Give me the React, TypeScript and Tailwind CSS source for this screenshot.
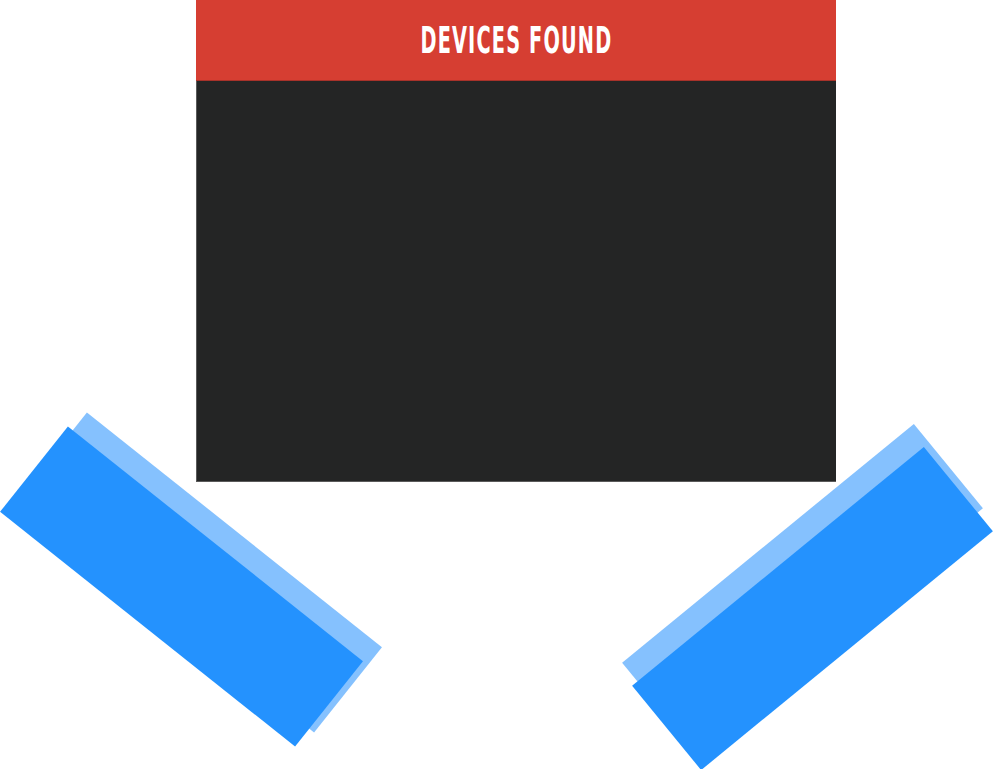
import React from 'react';

// decorative tilted bars below the panel
const bars = [
    { cls: 'left-[12px] top-[518px] rotate-[38.5deg] bg-[#85c1fe]' },
    { cls: 'left-[-7px] top-[532px] rotate-[38.5deg] bg-[#2492fe]' },
    { cls: 'left-[614px] top-[531px] -rotate-[39.3deg] bg-[#85c1fe]' },
    { cls: 'left-[624px] top-[554px] -rotate-[39.3deg] bg-[#2492fe]' },
];

export default function App() {
    return (
        <div className="relative w-[993px] h-[769px] overflow-hidden bg-white">
            <div className="ml-[196px] w-[640px] flex flex-col">
                <div className="h-[81px] bg-[#d63e32] border-b border-[#a8322a] flex items-center justify-center">
                    <h1
                        className="text-white font-bold text-[37px] leading-none tracking-[2px] scale-x-[0.58] pt-[1px]"
                        style={{ fontFamily: '"Liberation Sans Narrow", "DejaVu Sans Condensed", "Liberation Sans", sans-serif' }}
                    >
                        DEVICES FOUND
                    </h1>
                </div>
                <div className="h-[401px] bg-[#242525] border-l border-b border-[#5a5a5a]" />
            </div>
            {bars.map((b, i) => (
                <div key={i} className={`absolute w-[377px] h-[109px] ${b.cls}`} />
            ))}
        </div>
    );
}
